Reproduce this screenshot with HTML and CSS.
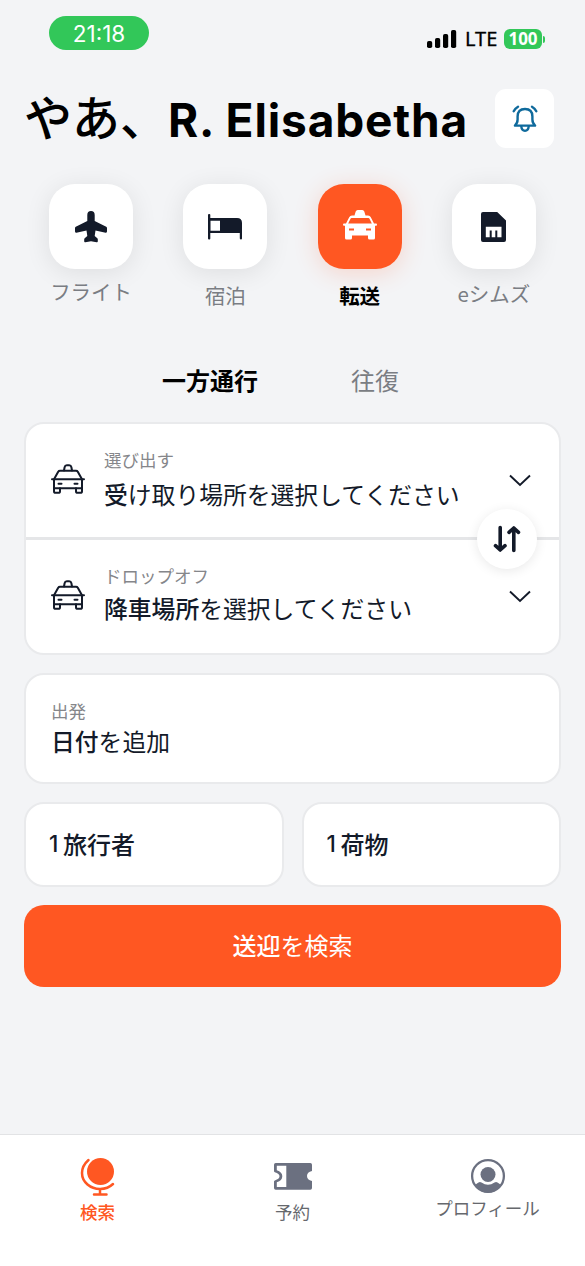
FILE: index.html
```html
<!DOCTYPE html>
<html lang="ja">
<head>
<meta charset="utf-8">
<meta name="viewport" content="width=device-width, initial-scale=1">
<title>転送</title>
<link rel="stylesheet" href="styles.css">
</head>
<body>
<svg class="defs" width="0" height="0">
  <symbol id="taxi" viewBox="0 0 34 30">
    <g fill="none" stroke="currentColor" stroke-width="2" stroke-linejoin="round" stroke-linecap="round">
      <path d="M13 6.500 13.600 3.200Q14 1.300 15.800 1.300H18.200Q20 1.300 20.400 3.200L21 6.500"/>
      <path d="M3 15.200 7.200 7.700Q7.800 6.700 9 6.700H25Q26.200 6.700 26.800 7.700L31 15.200"/>
      <path d="M1 15.200H33M3 15.200V24.300H31V15.200"/>
      <path d="M3 24.300V27.200Q3 28.800 4.600 28.800H7.400Q9 28.800 9 27.200V24.300M25 24.300V27.200Q25 28.800 26.600 28.800H29.400Q31 28.800 31 27.200V24.300"/>
      <path d="M7.500 19.700H10.500M23.500 19.700H26.500"/>
    </g>
  </symbol>
  <symbol id="chevron" viewBox="0 0 22 13"><path d="M1 1.500 11 11 21 1.500" fill="none" stroke="currentColor" stroke-width="1.900"/></symbol>
</svg>
<div class="app">
  <div class="status">
    <div class="clock">21:18</div>
    <div class="status-right">
      <svg width="30" height="20" viewBox="0 0 30 20"><rect x="0" y="12" width="5.200" height="7" rx="1.800"/><rect x="8" y="9" width="5.200" height="10" rx="1.800"/><rect x="16" y="5" width="5.200" height="14" rx="1.800"/><rect x="24" y="1" width="5.200" height="18" rx="1.800"/></svg>
      <span class="lte">LTE</span>
      <span class="battery">100</span><span class="battery-tip"></span>
    </div>
  </div>
  <header class="header">
    <h1 class="title"><span class="title-ja">やあ、</span><span class="title-name">R. Elisabetha</span></h1>
    <button class="bell" aria-label="通知">
      <svg width="26" height="28" viewBox="0 0 26 28" fill="none" stroke="#0f6a9c" stroke-width="2.400" stroke-linecap="round" stroke-linejoin="round"><path d="M2.900 20.600Q5.600 18.200 5.600 14.500V11.500Q5.600 4 13 4T20.400 11.500V14.500Q20.400 18.200 23.100 20.600Z"/><path d="M9.300 21.500Q9.700 25.700 13 25.700T16.700 21.500"/><path d="M1.700 6.300Q3.200 3.300 6 1.700M24.300 6.300Q22.800 3.300 20 1.700"/></svg>
    </button>
  </header>
  <nav class="services">
    <a class="service service-kana">
      <span class="tile"><svg width="32" height="32" viewBox="0 0 32 32" fill="#131a29"><path d="M16 0Q19.700 0 19.700 4V10L31.200 15.800Q32 16.300 32 17.200V20.600Q32 22 30.600 21.700L20.500 19.500 19.700 25 22.300 27.200Q22.800 27.700 22.800 28.400V30.300Q22.800 31.500 21.600 31.200L16 30.200 10.400 31.200Q9.200 31.500 9.200 30.300V28.400Q9.200 27.700 9.700 27.200L12.300 25 11.500 19.500 1.400 21.700Q0 22 0 20.600V17.200Q0 16.300 .8 15.800L12.300 10V4Q12.300 0 16 0Z"/></svg></span>
      <span class="service-label">フライト</span>
    </a>
    <a class="service">
      <span class="tile tile-bed"><svg width="34" height="26" viewBox="0 0 34 26" fill="#131a29"><rect width="2.300" height="25.500" rx="1"/><path fill-rule="evenodd" d="M1 4H29Q34 4 34 9V24.500Q34 25.500 33 25.500T31.800 24.500V19H1ZM2.300 6.700V16.800H12V6.700Z"/></svg></span>
      <span class="service-label">宿泊</span>
    </a>
    <a class="service service-active">
      <span class="tile tile-taxi"><svg width="34" height="30" viewBox="0 0 34 30" fill="#fff"><path fill-rule="evenodd" d="M11.500 5.500 12.700 1.500Q13.200 0 14.700 0H19.300Q20.800 0 21.300 1.500L22.500 5.500H25Q27 5.500 27.800 7.200L31 13.500H33Q34 13.500 34 14.700T33 15.800H32V28Q32 29.500 30.500 29.500H26.500Q25 29.500 25 28V25.500H9V28Q9 29.500 7.500 29.500H3.500Q2 29.500 2 28V15.800H1Q0 15.800 0 14.700T1 13.500H3L6.200 7.200Q7 5.500 9 5.500ZM8.600 8Q7.900 8 7.500 8.800L5.200 13.600H28.800L26.500 8.800Q26.100 8 25.400 8ZM6 18.500V20.600H11V18.500ZM23 18.500V20.600H28V18.500Z"/></svg></span>
      <span class="service-label">転送</span>
    </a>
    <a class="service service-esim">
      <span class="tile"><svg width="25" height="30" viewBox="0 0 25 30" fill="#131a29"><path fill-rule="evenodd" d="M2 0H16.200L25 8.500V28Q25 30 23 30H2Q0 30 0 28V2Q0 0 2 0ZM4.800 14.800V25.300H8.700V18.500H10.700V25.300H14.300V18.500H16.300V25.300H20.500V14.800Z"/></svg></span>
      <span class="service-label">eシムズ</span>
    </a>
  </nav>
  <div class="tabs"><span class="tab tab-active">一方通行</span><span class="tab">往復</span></div>
  <main class="form">
    <section class="card route">
      <div class="stop">
        <svg class="stop-icon" width="34" height="30"><use href="#taxi"/></svg>
        <div class="stop-text"><span class="label">選び出す</span><span class="value"><b>受</b>け取り場所を選択してください</span></div>
        <svg class="chevron" width="22" height="13"><use href="#chevron"/></svg>
      </div>
      <div class="stop stop-drop">
        <svg class="stop-icon" width="34" height="30"><use href="#taxi"/></svg>
        <div class="stop-text"><span class="label">ドロップオフ</span><span class="value"><b>降車場所</b>を選択してください</span></div>
        <svg class="chevron" width="22" height="13"><use href="#chevron"/></svg>
      </div>
      <button class="swap" aria-label="入れ替え"><svg width="28" height="28" viewBox="0 0 28 28" fill="none" stroke="#131a29" stroke-width="3.600" stroke-linecap="round" stroke-linejoin="round"><path d="M7.200 2.500V25M2.500 20.700 7.200 25 12 20.700M20.800 25.500V3M16 7.300 20.800 3 25.500 7.300"/></svg></button>
    </section>
    <section class="card date"><span class="label">出発</span><span class="value"><b>日付</b>を追加</span></section>
    <div class="pair">
      <section class="card count"><span class="num">1</span>旅行者</section>
      <section class="card count"><span class="num">1</span>荷物</section>
    </div>
    <button class="submit"><b>送迎</b>を検索</button>
  </main>
  <nav class="bottom">
    <a class="nav-item nav-active">
      <svg width="36" height="40" viewBox="0 0 36 40"><circle cx="20.500" cy="14.500" r="13.500" fill="currentColor"/><path d="M8.500 3C-.5 11 .5 21.500 7.500 27.500S26 33.500 33 27M20 32V37M14 37.500H26.500" fill="none" stroke="currentColor" stroke-width="2.500" stroke-linecap="round"/></svg>
      <span class="nav-label">検索</span>
    </a>
    <a class="nav-item">
      <svg width="38" height="40" viewBox="0 0 38 40" fill="currentColor"><path fill-rule="evenodd" d="M1.700 6H36.300Q38 6 38 7.700V14Q33 15.200 33 19T38 24V31Q38 32.700 36.300 32.700H1.700Q0 32.700 0 31V24.500Q0 23.700 .8 23.400 5.500 22 5.500 19.300T.8 15.200Q0 14.900 0 14.100V7.700Q0 6 1.700 6ZM2.800 8.700V13.200Q8.300 15 8.300 19.300T2.800 25.300V30H12.300V8.700Z"/></svg>
      <span class="nav-label">予約</span>
    </a>
    <a class="nav-item nav-kana">
      <svg width="36" height="40" viewBox="0 0 36 40"><circle cx="18" cy="19" r="15.900" fill="none" stroke="currentColor" stroke-width="2.300"/><circle cx="18" cy="17.500" r="7.500" fill="currentColor"/><path d="M7 26.500Q9.500 24 11.500 25.500Q18 30 24.500 25.500Q26.500 24 29 26.500L31 28Q26 35.700 18 35.700T5 28Z" fill="currentColor"/></svg>
      <span class="nav-label">プロフィール</span>
    </a>
  </nav>
</div>
</body>
</html>
```
FILE: styles.css
```css
* { box-sizing: border-box; }
body { margin: 0; background: #f3f4f6; font-family: "Noto Sans CJK JP", sans-serif; color: #131a29; }
button { border: 0; padding: 0; font: inherit; }
b { font-weight: 500; }
svg { display: block; flex: none; }
.defs { position: absolute; }
.app { width: 585px; height: 1266px; display: flex; flex-direction: column; overflow: hidden; }

.status { height: 89px; padding: 16px 40px 0 49px; display: flex; justify-content: space-between; align-items: flex-start; }
.clock { width: 100px; height: 34px; border-radius: 17px; background: #32c759; color: #fff; font: 400 22.500px/36px Inter, sans-serif; text-align: center; }
.status-right { display: flex; align-items: center; height: 46px; }
.lte { font: 400 20px/24px "Noto Sans", sans-serif; color: #000; margin-left: 8px; width: 31px; -webkit-text-stroke: .3px #000; }
.battery { margin-left: 8px; width: 38px; height: 20px; border-radius: 6px; background: #32c759; color: #fff; font: 700 17px/20px "Noto Sans", sans-serif; text-align: center; }
.battery-tip { width: 2px; height: 7px; margin-left: 1px; background: #32c759; border-radius: 0 2px 2px 0; }

.header { height: 59px; padding: 0 31px 0 24px; display: flex; justify-content: space-between; align-items: center; }
.title { margin: 0; display: flex; align-items: flex-start; height: 59px; color: #000; white-space: nowrap; }
.title-ja { font-size: 48px; font-weight: 500; width: 144px; line-height: 53px; }
.title-name { font-family: Inter, sans-serif; font-size: 46px; font-weight: 700; line-height: 62px; letter-spacing: .85px; }
.bell { width: 59px; height: 59px; border-radius: 11px; background: #fff; display: flex; align-items: center; justify-content: center; }

.services { margin-top: 36px; padding: 0 24px; display: grid; grid-template-columns: repeat(4, 1fr); height: 137px; }
.service { display: flex; flex-direction: column; align-items: center; color: #7a7d83; }
.tile { width: 84px; height: 85px; border-radius: 26px; background: #fff; display: flex; align-items: center; justify-content: center; box-shadow: 0 4px 26px rgba(0, 0, 0, .09); }
.service-label { font-size: 20.500px; line-height: 30px; margin-top: 11px; }
.service-kana .service-label { margin-top: 7px; }
.service-esim .service-label { margin-top: 9px; }
.service-active { color: #000; font-weight: 700; }
.service-active .tile { background: #ff5722; box-shadow: 0 4px 24px rgba(255, 87, 34, .2); }
.tile-taxi svg { margin-bottom: 4px; }

.tabs { height: 101px; padding: 43px 0 0 162px; display: flex; gap: 93px; font-size: 24px; line-height: 32px; }
.tab { color: #7a7d83; }
.tab-active { color: #000; font-weight: 700; }

.form { padding: 0 24px; display: flex; flex-direction: column; gap: 18px; }
.card { background: #fff; border: 2px solid #e9eaec; border-radius: 20px; }
.route { position: relative; height: 233px; }
.stop { height: 116px; padding: 0 28px 0 25px; display: flex; align-items: center; border-bottom: 3px solid #e5e6e8; }
.stop-drop { border: 0; height: 113px; }
.stop-icon { margin-bottom: 4px; }
.stop-text { flex: 1; margin: -4px 0 0 19px; display: flex; flex-direction: column; gap: 4px; }
.stop-drop .stop-text { margin-top: -6px; gap: 2px; }
.label { font-size: 17.500px; line-height: 26px; color: #85868a; }
.value { font-size: 23.800px; line-height: 34px; white-space: nowrap; }
.swap { position: absolute; right: 22px; top: 85px; width: 60px; height: 60px; border-radius: 50%; background: #fff; box-shadow: 0 2px 12px rgba(0, 0, 0, .09); display: flex; align-items: center; justify-content: center; }
.date { height: 111px; padding: 23px 25px; display: flex; flex-direction: column; }
.pair { display: grid; grid-template-columns: 1fr 1fr; gap: 18px; }
.count { height: 85px; padding: 0 0 3px 23px; display: flex; align-items: center; font-size: 24px; font-weight: 500; }
.num { width: 14px; font: 500 22.500px/34px Inter, sans-serif; padding-top: 1px; }
.submit { height: 82px; border-radius: 20px; background: #ff5722; color: #fff; font-size: 24px; line-height: 34px; padding-bottom: 2px; }

.bottom { margin-top: auto; height: 132px; background: #fff; border-top: 1px solid #e2e3e5; padding-top: 22px; display: grid; grid-template-columns: repeat(3, 1fr); }
.nav-item { display: flex; flex-direction: column; align-items: center; color: #6b7080; }
.nav-label { font-size: 17.500px; line-height: 26px; margin-top: 2px; color: #66686d; }
.nav-active, .nav-active .nav-label { color: #ff5722; }
.nav-active .nav-label { font-weight: 500; }
.nav-kana .nav-label { margin-top: -2px; }
```
